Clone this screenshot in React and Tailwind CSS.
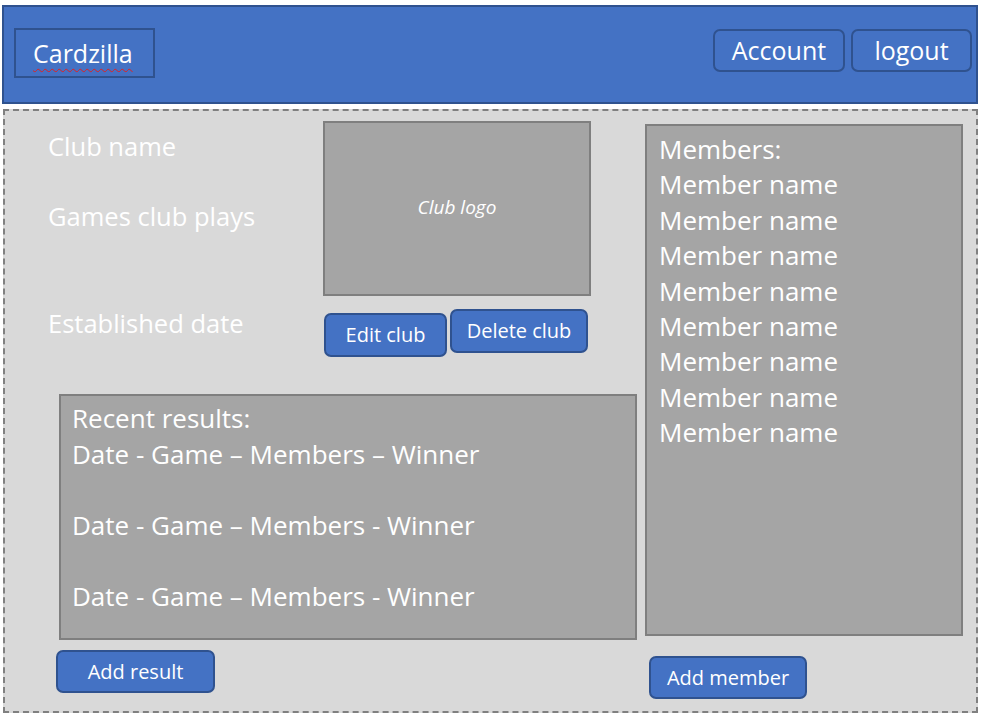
import React from 'react';

const font = { fontFamily: '"Open Sans", "Noto Sans", sans-serif' };

function Btn({ children, className = '' }) {
  return (
    <div
      className={`flex items-center justify-center rounded-[7px] border-2 border-[#2F528F] bg-[#4472C4] text-white ${className}`}
    >
      {children}
    </div>
  );
}

export default function App() {
  const members = Array.from({ length: 8 }, () => 'Member name');

  return (
    <div className="w-[981px] h-[718px] bg-white overflow-hidden" style={font}>
      {/* header */}
      <div className="mt-[5px] ml-[2px] w-[976px] h-[99px] bg-[#4472C4] border-2 border-[#2F528F] flex items-start">
        <div className="ml-[10px] mt-[21px] w-[141px] h-[50px] border-2 border-[#2F528F] flex items-center pl-[17px]">
          <span className="text-[25px] leading-none text-white underline decoration-wavy decoration-[#e02020] decoration-1 underline-offset-[5px]">
            Cardzilla
          </span>
        </div>
        <div className="ml-auto mr-[4px] mt-[22px] flex gap-[6px]">
          <Btn className="w-[132px] h-[43px] text-[25px]">Account</Btn>
          <Btn className="w-[121px] h-[43px] text-[25px]">logout</Btn>
        </div>
      </div>

      {/* main */}
      <div className="mt-[5px] ml-[3px] w-[975px] h-[604px] bg-[#D9D9D9] border-2 border-dashed border-[#808080] flex">
        <div className="w-[634px] flex flex-col">
          <div className="flex">
            <div className="ml-[43px] w-[275px] flex flex-col text-white text-[25.5px] leading-[32px]">
              <div className="mt-[19px]">Club name</div>
              <div className="mt-[38px]">Games club plays</div>
              <div className="mt-[75px]">Established date</div>
            </div>
            <div className="mt-[10px] flex flex-col">
              <div className="w-[268px] h-[175px] bg-[#A5A5A5] border-2 border-[#7F7F7F] flex items-center justify-center pb-[3px]">
                <span className="italic text-white text-[19px]">Club logo</span>
              </div>
              <div className="mt-[13px] flex items-start gap-[3px] text-[20px]">
                <Btn className="mt-[4px] ml-[1px] w-[123px] h-[44px]">Edit club</Btn>
                <Btn className="w-[138px] h-[44px]">Delete club</Btn>
              </div>
            </div>
          </div>

          <div className="ml-[54px] mt-[37px] w-[578px] h-[246px] bg-[#A5A5A5] border-2 border-[#7F7F7F] pl-[11px] pt-[4px] text-white text-[26px] leading-[36px]">
            <div>Recent results:</div>
            <div>Date - Game – Members – Winner</div>
            <div className="mt-[35px]">Date - Game – Members - Winner</div>
            <div className="mt-[35px]">Date - Game – Members - Winner</div>
          </div>

          <Btn className="ml-[51px] mt-[10px] w-[159px] h-[43px] text-[20px]">Add result</Btn>
        </div>

        <div className="ml-[6px] mt-[13px] flex flex-col">
          <div className="w-[318px] h-[512px] bg-[#A5A5A5] border-2 border-[#7F7F7F] pl-[12px] pt-[6px] text-white text-[26px] leading-[35.4px]">
            <div>Members:</div>
            {members.map((m, i) => (
              <div key={i}>{m}</div>
            ))}
          </div>
          <Btn className="ml-[4px] mt-[20px] w-[158px] h-[43px] text-[20px]">Add member</Btn>
        </div>
      </div>
    </div>
  );
}
